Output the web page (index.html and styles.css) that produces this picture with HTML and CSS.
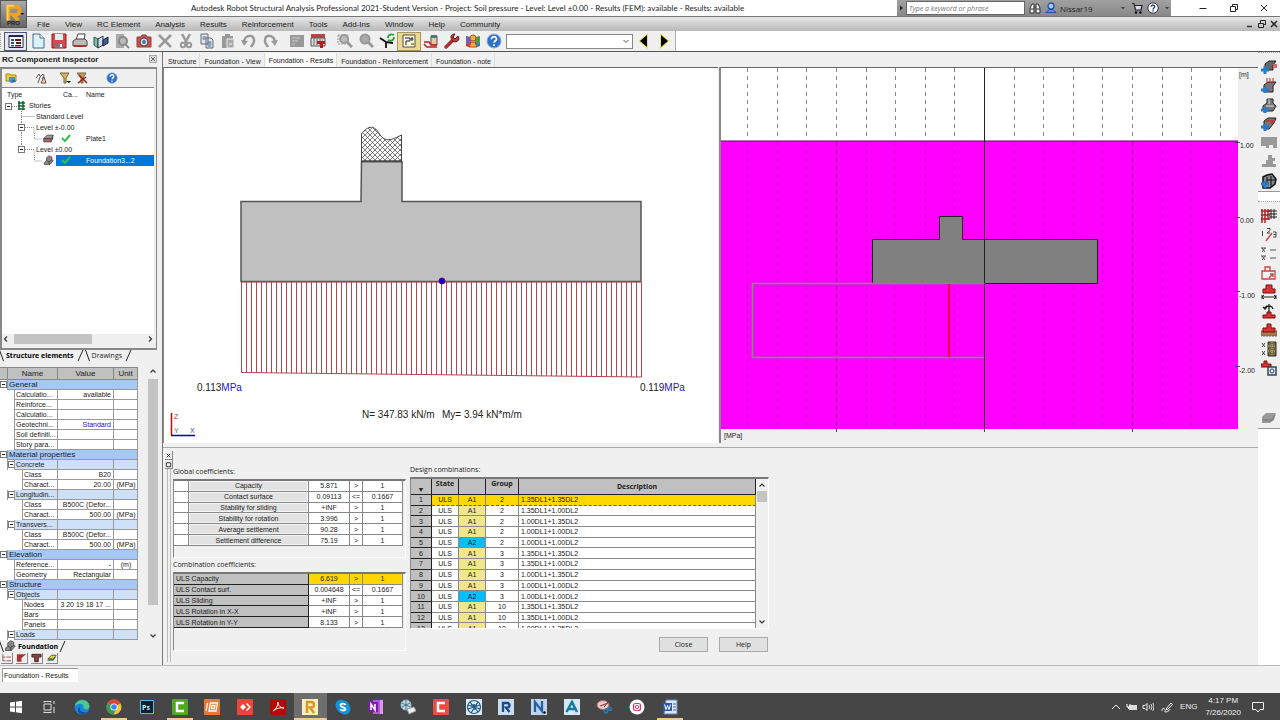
FILE: index.html
```html
<!DOCTYPE html>
<html lang="en">
<head>
  <meta charset="UTF-8" />
  <title>Autodesk Robot Structural Analysis Professional 2021</title>
  <link rel="stylesheet" href="styles.css">
</head>
<body>
  <!-- shared shapes -->
  <svg width="0" height="0" class="defs" aria-hidden="true">
    <symbol id="help" viewBox="0 0 16 16"><circle cx="8" cy="8" r="7" fill="#2f6fc4" stroke="#8fb4e6"/><path d="M5.5 6.2c0-3.4 5.2-3.2 5 0-.1 1.600-2.400 1.700-2.400 3.600M8 11.300v1.600" fill="none" stroke="#fff" stroke-width="1.800"/></symbol>
    <symbol id="slab" viewBox="0 0 16 16"><path d="M1 8l5-5h9l-3 5z" fill="#999" stroke="#444"/><path d="M1 8h11v5H1z" fill="#a66" stroke="#333"/><path d="M12 8l3-5v5l-3 5z" fill="#555"/></symbol>
    <symbol id="check" viewBox="0 0 10 10"><path d="M1 5l3 3 5-6" fill="none" stroke="#2fc050" stroke-width="2"/></symbol>
    <symbol id="minus" viewBox="0 0 7 7"><rect x=".5" y=".5" width="6" height="6" fill="#fff" stroke="#777"/><path d="M2 3.500h3" stroke="#222"/></symbol>
    <symbol id="found" viewBox="0 0 16 16"><path d="M2 11l3-3V4l4-3 4 2v4l2 1-5 6H2z" fill="#888" stroke="#444"/><path d="M5 8l4 2 4-3M9 10v4" fill="none" stroke="#333"/></symbol>
    <symbol id="up" viewBox="0 0 8 8"><path d="M1.500 5.500L4 3l2.500 2.500" fill="none" stroke="#333" stroke-width="1.200"/></symbol>
    <symbol id="down" viewBox="0 0 8 8"><path d="M1.500 2.500L4 5l2.500-2.500" fill="none" stroke="#333" stroke-width="1.200"/></symbol>
  </svg>

  <div class="app">
    <header class="titlebar">
      <button class="logo" aria-label="Application menu">
        <svg viewBox="0 0 27 27"><path d="M8 20V5h7q5 0 5 4.500T15 14h-2l6 6" fill="none" stroke="#f0a41c" stroke-width="4"/><path d="M6 3h8v2H8v15H6z" fill="#ffcf60"/><path d="M21 12h4l-2 2z" fill="#111"/></svg>
        <span>PRO</span>
      </button>
      <h1>Autodesk Robot Structural Analysis Professional 2021-Student Version - Project: Soil pressure - Level: Level ±0.00 - Results (FEM): available - Results: available</h1>
      <div class="infocenter">
        <svg class="s8" viewBox="0 0 8 8"><path d="M3 1.500v5L6 4z" fill="#222"/></svg>
        <input type="text" aria-label="Search" placeholder="Type a keyword or phrase">
        <button aria-label="Find"><svg class="s12" viewBox="0 0 12 12"><path d="M1 11V6l2-4h2v9zM7 11V2h2l2 4v5z" fill="#eee" stroke="#333"/><path d="M5 5h2M1 7h4M7 7h4" stroke="#333"/></svg></button>
        <button class="user"><svg class="s12" viewBox="0 0 12 12"><circle cx="6" cy="4" r="3" fill="#a9c8f5" stroke="#2450a8" stroke-width="1.300"/><path d="M1 10.500h10L8 7.500H4z" fill="#5d8ee0" stroke="#2450a8"/></svg>Nissar19</button>
        <svg class="s8" viewBox="0 0 8 8"><path d="M2 3h4L4 5.500z" fill="#444"/></svg>
        <button aria-label="Store"><svg class="s12" viewBox="0 0 12 12"><path d="M1 1.500h2L4.500 8h5.500l1-4.500H4" fill="#ddd" stroke="#223" stroke-width="1.200"/><circle cx="5" cy="10.500" r="1.200"/><circle cx="9.500" cy="10.500" r="1.200"/></svg></button>
        <button aria-label="Help"><svg class="s12" viewBox="0 0 12 12"><circle cx="6" cy="6" r="5.200" fill="#fff" stroke="#334"/><path d="M4.300 4.800c0-2.400 3.500-2.200 3.400 0C7.600 6 6 6 6 7.500M6 8.300v1.300" fill="none" stroke="#223a80" stroke-width="1.400"/></svg></button>
        <svg class="s8" viewBox="0 0 8 8"><path d="M2 3h4L4 5.500z" fill="#444"/></svg>
      </div>
      <div class="winbtns">
        <button aria-label="Minimize"><svg class="s8" viewBox="0 0 8 8"><path d="M.5 4.500h7" stroke="#222"/></svg></button>
        <button aria-label="Restore"><svg class="s8" viewBox="0 0 8 8"><path d="M.5 2.500h5v5h-5zM2.500 2V.5h5v5H6" fill="none" stroke="#222"/></svg></button>
        <button aria-label="Close"><svg class="s8" viewBox="0 0 8 8"><path d="M1 1l6 6M7 1L1 7" stroke="#222"/></svg></button>
      </div>
    </header>

    <nav class="menubar">
      <button>File</button><button>View</button><button>RC Element</button><button>Analysis</button><button>Results</button><button>Reinforcement</button><button>Tools</button><button>Add-Ins</button><button>Window</button><button>Help</button><button>Community</button>
      <div class="mdi">
        <button aria-label="Minimize view"><svg class="s8" viewBox="0 0 8 8"><path d="M1 6.500h5" stroke="#333" stroke-width="1.500"/></svg></button>
        <button aria-label="Restore view"><svg class="s8" viewBox="0 0 8 8"><path d="M.5 3.500h5v4h-5zM2.500 3V.5h5v4H6" fill="none" stroke="#222"/></svg></button>
        <button aria-label="Close view"><svg class="s8" viewBox="0 0 8 8"><path d="M1 1l6 6M7 1L1 7" stroke="#222" stroke-width="1.500"/></svg></button>
      </div>
    </nav>

    <div class="toolbar">
      <div class="tools">
        <div class="grip"></div>
        <div class="group g1">
          <button class="on" aria-label="Inspector"><svg viewBox="0 0 16 16"><path d="M1 2.500h14v12H1z" fill="#fff" stroke="#225"/><path d="M1 2h14v2H1z" fill="#225"/><path d="M3 6h3v2H3zM3 9h3v2H3zM3 12h3v1.500H3z" fill="#258"/><path d="M7 6h6v2H7zM8 9h5v2H8zM7 12h6v1.500H7z" fill="#522"/></svg></button>
          <button aria-label="New"><svg viewBox="0 0 16 16"><path d="M3 1h7l4 4v10H3z" fill="#d9f1fb" stroke="#4a6a85"/><path d="M10 1v4h4" fill="#fff" stroke="#4a6a85"/></svg></button>
          <button aria-label="Save"><svg viewBox="0 0 16 16"><path d="M1 1h14v14H1z" fill="#d9484c" stroke="#8c2024"/><path d="M4 1h8v6H4z" fill="#dff0f5"/><path d="M4 10h8v5H4z" fill="#777"/><path d="M9 11h2v3H9z" fill="#eee"/></svg></button>
          <button aria-label="Print"><svg viewBox="0 0 16 16"><path d="M4 7l2-6h7l-1 6z" fill="#fff" stroke="#444"/><path d="M1 8l3-2h9l2 2v5H1z" fill="#bbb" stroke="#444"/><path d="M2 12h12v2H2z" fill="#a33"/></svg></button>
          <button aria-label="Model"><svg viewBox="0 0 16 16"><path d="M1 4l4 2v9l-4-3z" fill="#79c29a" stroke="#256"/><path d="M5 6l5-3v9l-5 3z" fill="#c8e0f5" stroke="#333"/><path d="M10 7l5-3v6l-5 3z" fill="#3d5f96" stroke="#223"/></svg></button>
          <button aria-label="Preview"><svg viewBox="0 0 16 16"><path d="M2 1h8v14H2z" fill="#aaa"/><circle cx="9" cy="8" r="4" fill="#bbb" stroke="#888" stroke-width="2"/><path d="M11 11l4 4" stroke="#888" stroke-width="2"/></svg></button>
          <button aria-label="Capture"><svg viewBox="0 0 16 16"><path d="M1 4h4l1-2h4l1 2h4v10H1z" fill="#c9504e" stroke="#844"/><circle cx="8" cy="9" r="4" fill="#ddd" stroke="#544"/><circle cx="8" cy="9" r="2" fill="#47a"/></svg></button>
          <button aria-label="Delete"><svg viewBox="0 0 16 16"><path d="M2 2l12 12M14 2L2 14" stroke="#999" stroke-width="2.500"/></svg></button>
          <button aria-label="Cut"><svg viewBox="0 0 16 16"><path d="M4 1l5 9M12 1L7 10" stroke="#999" stroke-width="2.500"/><circle cx="5" cy="12" r="2.200" fill="none" stroke="#999" stroke-width="2"/><circle cx="11" cy="12" r="2.200" fill="none" stroke="#999" stroke-width="2"/></svg></button>
          <button aria-label="Copy"><svg viewBox="0 0 16 16"><path d="M2 1h7v10H2zM7 5h5l2 2v8H7z" fill="#dfe8f0" stroke="#667"/><path d="M3.500 4h4M3.500 6h3M8.500 9h4M8.500 11h4M8.500 13h4" stroke="#468"/></svg></button>
          <button aria-label="Paste"><svg viewBox="0 0 16 16"><path d="M2 3h3V1h5v2h3v12H2z" fill="#999"/><path d="M7 6h7v9H7z" fill="#aaa" stroke="#eee"/><path d="M9 11h3" stroke="#eee"/></svg></button>
          <button aria-label="Undo"><svg viewBox="0 0 16 16"><path d="M3 9C4 1 14 1 13 8c0 3-2 4-3 6" fill="none" stroke="#999" stroke-width="2.500"/><path d="M0 7l7 1-4 5z" fill="#999"/></svg></button>
          <button aria-label="Redo"><svg viewBox="0 0 16 16"><path d="M13 9C12 1 2 1 3 8c0 3 2 4 3 6" fill="none" stroke="#999" stroke-width="2.500"/><path d="M16 7l-7 1 4 5z" fill="#999"/></svg></button>
        </div>
        <div class="group g2">
          <button aria-label="Notes"><svg viewBox="0 0 16 16"><path d="M1 2h14v12H1z" fill="#999"/><path d="M3 5h8M3 8h6M3 11h3" stroke="#ccc"/></svg></button>
          <button aria-label="Calculate"><svg viewBox="0 0 16 16"><path d="M1 1h14v4H1z" fill="#b44"/><path d="M1 5h14v8H1z" fill="#ddd" stroke="#555"/><path d="M3 7h10M3 9h10M3 11h10" stroke="#666" stroke-dasharray="2 1"/><path d="M7 8h8v3h-2v4h-3v-4H7z" fill="#a22"/></svg></button>
        </div>
        <div class="group g3">
          <button aria-label="Zoom window"><svg viewBox="0 0 16 16"><path d="M1 2h10v9H1z" fill="none" stroke="#999" stroke-dasharray="2 1"/><circle cx="7" cy="6" r="4" fill="#bbb" stroke="#999" stroke-width="2"/><path d="M10 9l5 5" stroke="#999" stroke-width="3"/></svg></button>
          <button aria-label="Zoom all"><svg viewBox="0 0 16 16"><circle cx="7" cy="6" r="4.500" fill="#aaa" stroke="#999" stroke-width="2"/><path d="M10 9l5 5" stroke="#999" stroke-width="3"/></svg></button>
          <button aria-label="Rotate"><svg viewBox="0 0 16 16"><path d="M1 5l6 4v6M7 9l7 1" fill="none" stroke="#111" stroke-width="1.800"/><path d="M9 5c0-4 4-4 6-3M15 4c0 4-4 4-6 3" fill="none" stroke="#2a9a3a" stroke-width="1.800"/></svg></button>
          <button class="on sand" aria-label="Display"><svg viewBox="0 0 16 16"><path d="M2 2h12v12H2z" fill="#f8f4e0" stroke="#554"/><path d="M4 5h5v3H5v4M11 4v4M9.500 6h3" fill="none" stroke="#223"/><path d="M10 10h3v2h-3z" fill="#b59a3a"/></svg></button>
          <button aria-label="Notes on results"><svg viewBox="0 0 16 16"><path d="M8 3h6v9H8z" fill="#e6c9a0" stroke="#744"/><path d="M8 2h6v3H8z" fill="#2a8a78"/><path d="M1 9h5l2 3h6M1 11l3 3h10" fill="none" stroke="#b22" stroke-width="1.500"/></svg></button>
          <button aria-label="Preferences"><svg viewBox="0 0 16 16"><path d="M2 14l7-7" stroke="#a33" stroke-width="3.500" stroke-linecap="round"/><path d="M14 3l-3 3-2-2 2-3c-4 0-5 3-3 6s6 2 7-1z" fill="#b34242" stroke="#611"/></svg></button>
          <button aria-label="Community"><svg viewBox="0 0 16 16"><path d="M1 3l5 1v8l-5-2z" fill="#6c62c0"/><path d="M15 3l-5 1v8l5-2z" fill="#4a9a50"/><circle cx="8" cy="5" r="3" fill="#e9b23a" stroke="#a52"/><path d="M4 14l2-5h4l2 5z" fill="#e9b23a" stroke="#c33"/><path d="M1 10l4 1-1 3-3-1z" fill="#c33"/><path d="M15 10l-4 1 1 3 3-1z" fill="#37a"/></svg></button>
          <button aria-label="Help"><svg viewBox="0 0 16 16"><use href="#help"/></svg></button>
        </div>
        <select aria-label="Case"><option></option></select>
        <button class="step" aria-label="Previous"><svg viewBox="0 0 16 16"><path d="M11 2v12L4 8z" stroke="#e8e860" stroke-width="2" paint-order="stroke"/></svg></button>
        <button class="step" aria-label="Next"><svg viewBox="0 0 16 16"><path d="M5 2v12l7-6z" stroke="#e8e860" stroke-width="2" paint-order="stroke"/></svg></button>
      </div>
    </div>

    <div class="main">
      <aside class="inspector">
        <div class="panel-title"><h2>RC Component Inspector</h2><button aria-label="Close inspector"><svg class="s8" viewBox="0 0 8 8"><rect x=".5" y=".5" width="7" height="7" fill="#ddd" stroke="#aaa"/><path d="M2 2l4 4M6 2L2 6" stroke="#666"/></svg></button></div>
        <div class="tree-box">
          <div class="tree-tools">
            <button aria-label="Open"><svg class="s12" viewBox="0 0 12 12"><path d="M1 2h4l1 1h5v6H1z" fill="#f0c840" stroke="#a80"/><path d="M4 5h6v5H4z" fill="#4a90d0"/><path d="M5 11l4-4 2 3z" fill="#2a6ab0"/></svg></button>
            <button class="far" aria-label="Edit"><svg class="s12" viewBox="0 0 12 12"><path d="M1 6l3-4 1 2M3 11l2-6 3-3 1 2-2 3" fill="none" stroke="#555"/><path d="M6 11l3-6 2 6z" fill="#ddb" stroke="#844"/></svg></button>
            <button class="far2" aria-label="Filter"><svg class="s12" viewBox="0 0 12 12"><path d="M1 1h9L7 6v5H5V6z" fill="#d9b45a" stroke="#764"/><path d="M7 9h5l-2 2z"/></svg></button>
            <button aria-label="Clear filter"><svg class="s12" viewBox="0 0 12 12"><path d="M1 1h9L7 6v5H5V6z" fill="#c9a04a" stroke="#764"/><path d="M3 3l8 8M10 5l-8 6" stroke="#922" stroke-width="1.500"/></svg></button>
            <button class="far" aria-label="Help"><svg class="s12" viewBox="0 0 16 16"><use href="#help"/></svg></button>
          </div>
          <div class="tree-head"><span>Type</span><span>Ca...</span><span>Name</span></div>
          <ul class="tree">
            <li><svg width="25" height="11" viewBox="0 0 25 11"><use href="#minus" x="2" y="3" width="7" height="7"/><path d="M9 6.500h5" stroke="#888" stroke-dasharray="1 1"/><path d="M16 1v9M20 1v9M15 3h7M15 6h7M15 9h7" stroke="#163" stroke-width="1.500"/></svg>Stories</li>
            <li><svg width="32" height="11" viewBox="0 0 32 11"><path d="M18.500 0v11M18.500 5.500h13" stroke="#888" stroke-dasharray="1 1"/></svg>Standard Level</li>
            <li><svg width="32" height="11" viewBox="0 0 32 11"><path d="M18.500 0v11M22 5.500h9v6" fill="none" stroke="#888" stroke-dasharray="1 1"/><use href="#minus" x="15" y="2" width="7" height="7"/></svg>Level ±-0.00</li>
            <li><svg width="52" height="11" viewBox="0 0 52 11"><path d="M18.500 0v11M31.500 0v6h8" fill="none" stroke="#888" stroke-dasharray="1 1"/><use href="#slab" x="40" y="0" width="11" height="11"/></svg><span class="cells"><svg class="tick" viewBox="0 0 10 10"><use href="#check"/></svg>Plate1</span></li>
            <li><svg width="32" height="11" viewBox="0 0 32 11"><path d="M18.500 0v6M22 5.500h9v6" fill="none" stroke="#888" stroke-dasharray="1 1"/><use href="#minus" x="15" y="2" width="7" height="7"/></svg>Level ±0.00</li>
            <li><svg width="52" height="11" viewBox="0 0 52 11"><path d="M31.500 0v6h8" fill="none" stroke="#888" stroke-dasharray="1 1"/><use href="#found" x="40" y="0" width="11" height="11"/></svg><span class="cells selected"><svg class="tick" viewBox="0 0 10 10"><use href="#check"/></svg>Foundation3...2</span></li>
          </ul>
          <div class="hscroll"><svg class="s8" viewBox="0 0 8 8"><path d="M5 1.500L2.500 4 5 6.500" fill="none" stroke="#333" stroke-width="1.200"/></svg><div class="track"><div class="thumb"></div></div><svg class="s8" viewBox="0 0 8 8"><path d="M3 1.500L5.500 4 3 6.500" fill="none" stroke="#333" stroke-width="1.200"/></svg></div>
        </div>
        <div class="sheet-tabs roomy"><i class="back"></i><button class="active">Structure elements</button><i></i><i class="back"></i><button>Drawings</button><i></i></div>
        <div class="props">
          <table>
            <colgroup><col class="w8"><col class="w7"><col class="w8"><col><col class="w56"><col class="w24"></colgroup>
            <thead><tr><th></th><th colspan="3">Name</th><th>Value</th><th>Unit</th></tr></thead>
            <tbody>
              <tr class="cat"><td><svg><use href="#minus"/></svg></td><td colspan="5">General</td></tr>
              <tr><td></td><td></td><td colspan="2">Calculatio...</td><td>available</td><td></td></tr>
              <tr><td></td><td></td><td colspan="2">Reinforce...</td><td></td><td></td></tr>
              <tr><td></td><td></td><td colspan="2">Calculatio...</td><td></td><td></td></tr>
              <tr><td></td><td></td><td colspan="2">Geotechni...</td><td class="blue">Standard</td><td></td></tr>
              <tr><td></td><td></td><td colspan="2">Soil definiti...</td><td></td><td></td></tr>
              <tr><td></td><td></td><td colspan="2">Story para...</td><td></td><td></td></tr>
              <tr class="cat"><td><svg><use href="#minus"/></svg></td><td colspan="5">Material properties</td></tr>
              <tr class="sub"><td></td><td><svg><use href="#minus"/></svg></td><td colspan="2">Concrete</td><td></td><td></td></tr>
              <tr class="leaf"><td></td><td></td><td></td><td>Class</td><td>B20</td><td></td></tr>
              <tr class="leaf"><td></td><td></td><td></td><td>Charact...</td><td>20.00</td><td>(MPa)</td></tr>
              <tr class="sub"><td></td><td><svg><use href="#minus"/></svg></td><td colspan="2">Longitudin...</td><td></td><td></td></tr>
              <tr class="leaf"><td></td><td></td><td></td><td>Class</td><td>B500C (Defor...</td><td></td></tr>
              <tr class="leaf"><td></td><td></td><td></td><td>Charact...</td><td>500.00</td><td>(MPa)</td></tr>
              <tr class="sub"><td></td><td><svg><use href="#minus"/></svg></td><td colspan="2">Transvers...</td><td></td><td></td></tr>
              <tr class="leaf"><td></td><td></td><td></td><td>Class</td><td>B500C (Defor...</td><td></td></tr>
              <tr class="leaf"><td></td><td></td><td></td><td>Charact...</td><td>500.00</td><td>(MPa)</td></tr>
              <tr class="cat"><td><svg><use href="#minus"/></svg></td><td colspan="5">Elevation</td></tr>
              <tr><td></td><td></td><td colspan="2">Reference...</td><td>-</td><td>(m)</td></tr>
              <tr><td></td><td></td><td colspan="2">Geometry</td><td>Rectangular</td><td></td></tr>
              <tr class="cat"><td><svg><use href="#minus"/></svg></td><td colspan="5">Structure</td></tr>
              <tr class="sub"><td></td><td><svg><use href="#minus"/></svg></td><td colspan="2">Objects</td><td></td><td></td></tr>
              <tr class="leaf"><td></td><td></td><td></td><td>Nodes</td><td>3 20 19 18 17 ...</td><td></td></tr>
              <tr class="leaf"><td></td><td></td><td></td><td>Bars</td><td></td><td></td></tr>
              <tr class="leaf"><td></td><td></td><td></td><td>Panels</td><td></td><td></td></tr>
              <tr class="sub"><td></td><td><svg><use href="#minus"/></svg></td><td colspan="2">Loads</td><td></td><td></td></tr>
            </tbody>
          </table>
          <div class="vscroll"><svg class="s8"><use href="#up"/></svg><div class="thumb"></div><svg class="s8"><use href="#down"/></svg></div>
        </div>
        <div class="sheet-tabs"><i class="back"></i><svg class="s12"><use href="#found"/></svg><button class="active">Foundation</button><i></i></div>
        <div class="mini">
          <button aria-label="Tree"><svg viewBox="0 0 12 10"><path d="M2 1v7h3M2 4h3M6 4h5M6 8h5" fill="none" stroke="#855"/></svg></button>
          <button aria-label="Section"><svg viewBox="0 0 12 10"><path d="M1 1h10L6 5v4H1z" fill="#a33"/></svg></button>
          <button aria-label="Column"><svg viewBox="0 0 12 10"><path d="M1 1h10v3H8v5H4V4H1z" fill="#844" stroke="#422"/></svg></button>
          <button aria-label="Layers"><svg viewBox="0 0 12 10"><path d="M1 8l4-4h6L8 8z" fill="#386"/><path d="M2 6l4-4h5L8 6z" fill="#ec5" stroke="#552"/></svg></button>
        </div>
      </aside>

      <section class="workspace">
        <div class="tabs">
          <button>Structure</button><button>Foundation - View</button><button class="active">Foundation - Results</button><button>Foundation - Reinforcement</button><button>Foundation - note</button>
        </div>
        <div class="views">
          <div class="view view-left">
            <svg viewBox="164 68 550 375" preserveAspectRatio="xMinYMin meet">
              <defs>
                <pattern id="hatch" width="5" height="5" patternUnits="userSpaceOnUse"><path d="M0 0l5 5M5 0L0 5" stroke="#444" stroke-width=".7"/></pattern>
                <pattern id="bars" x="241" y="0" width="5" height="400" patternUnits="userSpaceOnUse"><path d="M.5 0v400" stroke="#b4454f"/></pattern>
              </defs>
              <path d="M361.500 161V134c7-9 13-9 18 0 6 9 12 6 22 1v26z" fill="url(#hatch)" stroke="#444"/>
              <path d="M361.500 161.500h40.500v40h239v80h-400v-80h120z" fill="#c0c0c0" stroke="#555" stroke-width="1.500"/>
              <path d="M361 161.500h41" stroke="#444" stroke-width="1.500"/>
              <path d="M241.500 282h400v95l-400-4.500z" fill="url(#bars)" stroke="#b4454f"/>
              <circle cx="442" cy="281" r="3" fill="#1000c8" stroke="#600080"/>
              <text x="197" y="391">0.113<tspan class="unit">MPa</tspan></text>
              <text x="640" y="391">0.119<tspan class="unit">MPa</tspan></text>
              <text x="362" y="418">N= 347.83 kN/m</text>
              <text x="442" y="418">My= 3.94 kN*m/m</text>
              <path d="M171.500 413v22" stroke="#d00" stroke-width="1.500"/><path d="M171 435.500h24" stroke="#00a" stroke-width="1.500"/>
              <g class="axis"><text class="z" x="174" y="419">Z</text><text class="y" x="174" y="433">Y</text><text class="x" x="190" y="433">X</text></g>
            </svg>
          </div>
          <div class="view view-right">
            <svg viewBox="722 68 535 375" preserveAspectRatio="xMinYMin meet">
              <path d="M722 68h517v361H722z" fill="#fff"/>
              <path d="M722 141h517v288H722z" fill="#f0f"/>
              <path d="M722 141h517" stroke="#606"/>
              <g stroke="#888" stroke-dasharray="4 4">
                <path d="M748.500 68v72M778.500 68v72M807.500 68v72M837.500 68v72M867.500 68v72M896.500 68v72M926.500 68v72M955.500 68v72M1015.500 68v72M1044.500 68v72M1074.500 68v72M1103.500 68v72M1133.500 68v72M1163.500 68v72M1192.500 68v72M1221.500 68v72"/>
              </g>
              <g stroke="#d010d0" stroke-dasharray="4 4">
                <path d="M748.500 142v287M778.500 142v287M807.500 142v287M867.500 142v287M896.500 142v287M926.500 142v287M955.500 142v287M1015.500 142v287M1044.500 142v287M1074.500 142v287M1103.500 142v287M1163.500 142v287M1192.500 142v287M1221.500 142v287"/>
                <path d="M837.500 142v287M1133.500 142v287" stroke="#707"/>
              </g>
              <path d="M873.500 239.500h67v-23h23v23h135v44h-225z" fill="#808080" stroke="#222"/>
              <path d="M985.500 68v361" stroke="#222"/>
              <path d="M985.500 283.500h-232v74h232" fill="none" stroke="#6a9a6a" stroke-width="1.500"/>
              <path d="M950 284v73" stroke="#f00030" stroke-width="2"/>
              <path d="M1236 142.500h5M1236 217.500h5M1236 291.500h5M1236 366.500h5M985.500 428v4M837.500 428v4M1133.500 428v4" stroke="#444"/>
              <g class="scale"><text x="1240" y="77">[m]</text><text x="1241" y="148">1.00</text><text x="1241" y="223">0.00</text><text x="1240" y="298">-1.00</text><text x="1240" y="373">-2.00</text><text x="725" y="438">[MPa]</text></g>
            </svg>
          </div>
        </div>

        <div class="results">
          <div class="dock">
            <button aria-label="Close panel"><svg viewBox="0 0 8 8"><path d="M2 2l4 4M6 2L2 6" stroke="#222"/></svg></button>
            <button aria-label="Maximize panel"><svg viewBox="0 0 8 8"><path d="M1.500 2h5v4.500h-5z" fill="none" stroke="#222"/></svg></button>
            <div class="rail"></div>
          </div>
          <div class="coefs">
            <h3>Global coefficients:</h3>
            <div class="sunken">
              <table class="coef global">
                <colgroup><col class="w15"><col><col class="w41"><col class="w13"><col class="w40"></colgroup>
                <tr><td></td><th>Capacity</th><td>5.871</td><td>&gt;</td><td>1</td></tr>
                <tr><td></td><th>Contact surface</th><td>0.09113</td><td>&lt;=</td><td>0.1667</td></tr>
                <tr><td></td><th>Stability for sliding</th><td>+INF</td><td>&gt;</td><td>1</td></tr>
                <tr><td></td><th>Stability for rotation</th><td>3.996</td><td>&gt;</td><td>1</td></tr>
                <tr><td></td><th>Average settlement</th><td>90.28</td><td>&gt;</td><td>1</td></tr>
                <tr><td></td><th>Settlement difference</th><td>75.19</td><td>&gt;</td><td>1</td></tr>
              </table>
            </div>
            <h3>Combination coefficients:</h3>
            <div class="sunken">
              <table class="coef combo">
                <colgroup><col><col class="w41"><col class="w13"><col class="w40"></colgroup>
                <tr class="hot"><th>ULS Capacity</th><td>6.619</td><td>&gt;</td><td>1</td></tr>
                <tr><th>ULS Contact surf.</th><td>0.004648</td><td>&lt;=</td><td>0.1667</td></tr>
                <tr><th>ULS Sliding</th><td>+INF</td><td>&gt;</td><td>1</td></tr>
                <tr><th>ULS Rotation in X-X</th><td>+INF</td><td>&gt;</td><td>1</td></tr>
                <tr><th>ULS Rotation in Y-Y</th><td>8.133</td><td>&gt;</td><td>1</td></tr>
              </table>
            </div>
          </div>
          <div class="combos">
            <h3>Design combinations:</h3>
            <div class="sunken combo-list">
              <table>
                <colgroup><col class="w21"><col class="w27"><col class="w27"><col class="w33"><col></colgroup>
                <thead><tr><th class="sort">▼</th><th>State</th><th></th><th>Group</th><th class="mid">Description</th></tr></thead>
                <tbody>
                  <tr class="hot"><th>1</th><td>ULS</td><td>A1</td><td>2</td><td>1.35DL1+1.35DL2</td></tr>
                  <tr><th>2</th><td>ULS</td><td>A1</td><td>2</td><td>1.35DL1+1.00DL2</td></tr>
                  <tr><th>3</th><td>ULS</td><td>A1</td><td>2</td><td>1.00DL1+1.35DL2</td></tr>
                  <tr><th>4</th><td>ULS</td><td>A1</td><td>2</td><td>1.00DL1+1.00DL2</td></tr>
                  <tr><th>5</th><td>ULS</td><td class="a2">A2</td><td>2</td><td>1.00DL1+1.00DL2</td></tr>
                  <tr><th>6</th><td>ULS</td><td>A1</td><td>3</td><td>1.35DL1+1.35DL2</td></tr>
                  <tr><th>7</th><td>ULS</td><td>A1</td><td>3</td><td>1.35DL1+1.00DL2</td></tr>
                  <tr><th>8</th><td>ULS</td><td>A1</td><td>3</td><td>1.00DL1+1.35DL2</td></tr>
                  <tr><th>9</th><td>ULS</td><td>A1</td><td>3</td><td>1.00DL1+1.00DL2</td></tr>
                  <tr><th>10</th><td>ULS</td><td class="a2">A2</td><td>3</td><td>1.00DL1+1.00DL2</td></tr>
                  <tr><th>11</th><td>ULS</td><td>A1</td><td>10</td><td>1.35DL1+1.35DL2</td></tr>
                  <tr><th>12</th><td>ULS</td><td>A1</td><td>10</td><td>1.35DL1+1.00DL2</td></tr>
                  <tr><th>13</th><td>ULS</td><td>A1</td><td>10</td><td>1.00DL1+1.35DL2</td></tr>
                </tbody>
              </table>
              <div class="vscroll"><svg class="s8"><use href="#up"/></svg><div class="thumb"></div><svg class="s8"><use href="#down"/></svg></div>
            </div>
            <div class="actions"><button>Close</button><button>Help</button></div>
          </div>
        </div>
      </section>

      <aside class="sidetools">
        <div class="strip">
          <button aria-label="Loads"><svg viewBox="0 0 16 16"><path d="M4 5l4-3h7l-3 4v5H4z" fill="#666" stroke="#222"/><path d="M0 11h8M4 7v8" stroke="#2a7ac8" stroke-width="3"/><path d="M12 5h4v4h-4z" fill="#d66"/></svg></button>
          <button aria-label="Add column"><svg viewBox="0 0 16 16"><path d="M3 7l4-3h8l-3 4v6H3z" fill="#777" stroke="#222"/><path d="M6 0v5M9 0v5M12 0v5" stroke="#c22"/><path d="M0 12h8M4 9v6" stroke="#2a7ac8" stroke-width="3"/></svg></button>
          <button aria-label="Add footing"><svg viewBox="0 0 16 16"><path d="M2 9l4-3V2h6v4l3 3-3 5H2z" fill="#777" stroke="#222"/><path d="M5 9h8M8 2v5" stroke="#ddd"/><path d="M0 13h8M4 10v6" stroke="#2a7ac8" stroke-width="3"/></svg></button>
          <button aria-label="Add beam"><svg viewBox="0 0 16 16"><path d="M3 5l4-3h8l-2 5-5 6H3z" fill="#777" stroke="#222"/><path d="M5 5h9M10 8l4-4" stroke="#c33" stroke-width="1.500"/><path d="M0 11h8M4 8v7" stroke="#2a7ac8" stroke-width="3"/></svg></button>
          <button aria-label="Wall"><svg viewBox="0 0 16 16"><path d="M0 2h16v11h-4v-3H8v3H5v-2H0z" fill="#999"/></svg></button>
          <button aria-label="Stairs"><svg viewBox="0 0 16 16"><path d="M7 1h4v3h3v3h-2v3h3v3H1v-3h4V6h2z" fill="#999"/></svg></button>
          <button aria-label="Tank"><svg viewBox="0 0 16 16"><path d="M2 4l4-2 5-1 4 5-1 5-5 4H2z" fill="#888" stroke="#111" stroke-width="1.500"/><path d="M6 4v6M6 7h9M10 3v10" stroke="#111"/><path d="M0 11h8M4 8v7" stroke="#2a7ac8" stroke-width="3"/></svg></button>
        </div>
        <div class="strip second">
          <button aria-label="Grid"><svg viewBox="0 0 16 16"><path d="M1 1v14M4 1v14M7 1v11M0 3h9M0 7h9M0 11h9" stroke="#a22" stroke-width="1.500"/><path d="M8 3h8M8 6h8M8 9h8M10 1v10M13 1v10" stroke="#222"/></svg></button>
          <button aria-label="Numbers"><svg viewBox="0 0 16 16"><path d="M1.500 4v5M6 1.500h3v2L6 6h3M12 5h3v5h-3M12.500 7.500H15" fill="none" stroke="#444"/><path d="M5 14l6-8" stroke="#d44" stroke-width="1.500"/></svg></button>
          <button aria-label="List"><svg viewBox="0 0 16 16"><path d="M1 2l3 4M4 2L1 6M1 10l3 4M4 10l-3 4M0 2h5M0 10h5M9 4h6M9 12h6" stroke="#555"/></svg></button>
          <button aria-label="Dimensions"><svg viewBox="0 0 16 16"><path d="M1 6h13v8H1zM4 6V2h5v4M9 9h3v3M12 9l-4 4" fill="none" stroke="#c44" stroke-width="1.300"/></svg></button>
          <button aria-label="Footing width"><svg viewBox="0 0 16 16"><path d="M5 1h6v4h3v4H2V5h3z" fill="#d33" stroke="#711"/><path d="M1 13h14M1 11v4M15 11v4M3 11l-2 2 2 2M13 11l2 2-2 2" fill="none" stroke="#222"/></svg></button>
          <button aria-label="Forces"><svg viewBox="0 0 16 16"><path d="M6 9h4v3h4v3H2v-3h4z" fill="#d33" stroke="#711"/><path d="M8 9V1M4 6c0-4 7-4 8 0M2 4l2 2 2-2" fill="none" stroke="#222" stroke-width="1.300"/></svg></button>
          <button aria-label="Soil"><svg viewBox="0 0 16 16"><path d="M0 9h16v5H0z" fill="#a87850" stroke="#654" stroke-dasharray="2 1"/><path d="M6 2h4v4h4v4H2V6h4z" fill="#d33" stroke="#711"/></svg></button>
          <button aria-label="Soil layers"><svg viewBox="0 0 16 16"><path d="M1 2l3 4M4 2L1 6M1 10l3 4M4 10l-3 4" stroke="#444"/><path d="M7 1h8v14H7z" fill="#776b3a" stroke="#332"/><path d="M7 5h8M7 10h8M11 1v14" stroke="#bba" stroke-dasharray="1 1"/></svg></button>
          <button aria-label="Settings"><svg viewBox="0 0 16 16"><path d="M3 1h3v3h4v3H0V4h3z" fill="#d33" stroke="#711"/><path d="M7 7h8v8H7z" fill="#dde8f4" stroke="#345" stroke-width="1.500"/><circle cx="11" cy="11" r="2" fill="none" stroke="#345"/></svg></button>
          <button class="last" aria-label="Export"><svg viewBox="0 0 16 16"><path d="M1 7l4-4h10l-2 7-4 3H1z" fill="#999"/><path d="M2 10h9l3-5" fill="none" stroke="#777"/></svg></button>
        </div>
      </aside>
    </div>

    <footer class="status"><span>Foundation - Results</span></footer>

    <div class="taskbar">
      <div class="apps">
        <button aria-label="Start"><svg viewBox="0 0 16 16"><path d="M2 3.500l5-.7v4.700H2zM8 2.700l6-.9v5.700H8zM2 8.500h5v4.700l-5-.7zM8 8.500h6v5.700l-6-.9z" fill="#fff"/></svg></button>
        <button aria-label="Task view"><svg viewBox="0 0 16 16"><path d="M3 5h7v6H3zM3 3.500V2M10 3.500V2M3 12.500V14M10 12.500V14M3 2.500h7M3 13.500h7M13 2v3M13 8v6" fill="none" stroke="#ddd"/></svg></button>
        <button aria-label="Edge"><svg viewBox="0 0 16 16"><circle cx="8" cy="8" r="7.500" fill="#1a86d8"/><path d="M1 7C2 0 14-1 15.500 7c0 4-5 4-6 2 1-4-4-6-8.500-2z" fill="#4dcb8c"/><path d="M6 8c-1 4 3 6 7 5-3 4-9 2-9-2 0-2 1-3 2-3z" fill="#0d4fa0"/></svg></button>
        <button class="open" aria-label="Chrome"><svg viewBox="0 0 16 16"><circle cx="8" cy="8" r="7.500" fill="#f2c52c"/><path d="M8 8L1.500 4.300A7.500 7.500 0 0114.500 4.300z" fill="#dc4437"/><path d="M8 8L1.500 4.300A7.500 7.500 0 007.500 15.500l3-6z" fill="#2da04f"/><circle cx="8" cy="8" r="3.600" fill="#fff"/><circle cx="8" cy="8" r="2.800" fill="#4285f4"/></svg></button>
        <button aria-label="Photoshop"><svg viewBox="0 0 16 16"><path d="M1.500 1.500h13v13h-13z" fill="#07202e" stroke="#4ac0e8"/><text x="3" y="11" fill="#cdeefc">Ps</text></svg></button>
        <button class="open" aria-label="Camtasia"><svg viewBox="0 0 16 16"><rect width="16" height="16" rx="1" fill="#4fa81e"/><path d="M12 4H5v8h7" fill="none" stroke="#fff" stroke-width="2.500"/></svg></button>
        <button aria-label="IDM"><svg viewBox="0 0 16 16"><rect width="16" height="16" rx="1" fill="#e67a34"/><path d="M3.500 4L2 12M6.500 4h7L12 12H5zM8 6.500h3L10.300 9.500H7.500z" fill="none" stroke="#fff" stroke-width="1.300"/></svg></button>
        <button aria-label="AnyDesk"><svg viewBox="0 0 16 16"><rect width="16" height="16" rx="1" fill="#ee4438"/><path d="M3 8l3-3 3 3-3 3zM9 5l1-1 4 4-4 4-1-1 3-3z" fill="#fff"/></svg></button>
        <button aria-label="Acrobat"><svg viewBox="0 0 16 16"><rect width="16" height="16" rx="2" fill="#b30b00"/><path d="M3 12c3-2 5-5 5-9 0 4 3 6 6 6-4-.5-7 0-11 3z" fill="none" stroke="#fff"/></svg></button>
        <button class="open current" aria-label="Robot"><svg viewBox="0 0 16 16"><path d="M0 0h16v16H0z" fill="#f9ecc8"/><path d="M5 14V3h4q3 0 3 2.800T9 8.600H8l4 5.400" fill="none" stroke="#dc981c" stroke-width="2.500"/></svg></button>
        <button aria-label="Skype"><svg viewBox="0 0 16 16"><circle cx="6" cy="6" r="5.500" fill="#1493dc"/><circle cx="10" cy="10" r="5.500" fill="#1493dc"/><circle cx="8" cy="8" r="6.500" fill="#1493dc"/><path d="M10.500 6C10 4 5.500 4 5.500 6.300S10.500 8 10.500 10 6 12 5.300 10" fill="none" stroke="#fff" stroke-width="1.800"/></svg></button>
        <button aria-label="OneNote"><svg viewBox="0 0 16 16"><path d="M5 1h10v14H5z" fill="#b45ad0"/><path d="M12 1h3v14h-3z" fill="#d89ae8"/><path d="M0 3h10v10H0z" fill="#7a1fa0"/><path d="M3 11V5l4 6V5" fill="none" stroke="#fff" stroke-width="1.500"/></svg></button>
        <button aria-label="Network"><svg viewBox="0 0 16 16"><circle cx="6" cy="6" r="5" fill="#b9dbe9" stroke="#9bc"/><path d="M2 4c3 2 5 2 8 0M2 8c3-2 5-2 8 0M6 1v10" fill="none" stroke="#578"/><path d="M7 10l7-2 2 4-7 3z" fill="#eee" stroke="#999"/></svg></button>
        <button aria-label="Recorder"><svg viewBox="0 0 16 16"><rect width="16" height="16" rx="1" fill="#ea4d3d"/><path d="M12 4H5v8h7" fill="none" stroke="#fff" stroke-width="2.500"/></svg></button>
        <button aria-label="Sphere"><svg viewBox="0 0 16 16"><path d="M0 0h16v16H0z" fill="#dcebf5"/><path d="M8 1.500A6.500 6.500 0 118 14.500 6.500 6.500 0 018 1.500M2 6l12 4M4 3l8 10M12 3L5 14M2 10l12-4M8 5v6M5 6h6" fill="none" stroke="#1d5a84" stroke-width="1.200"/></svg></button>
        <button aria-label="Revit"><svg viewBox="0 0 16 16"><path d="M0 0h16v16H0z" fill="#c9dcf0"/><path d="M5 13V4h4q2.500 0 2.500 2.300T9 8.600H8l3.500 4.400" fill="none" stroke="#1c4a8c" stroke-width="2.300"/></svg></button>
        <button aria-label="Navisworks"><svg viewBox="0 0 16 16"><path d="M0 0h16v16H0z" fill="#bcd4ee"/><path d="M4 13V3l7 9V2" fill="none" stroke="#2660a0" stroke-width="2.300"/><circle cx="13.500" cy="13.500" r="1.200"/></svg></button>
        <button aria-label="AutoCAD"><svg viewBox="0 0 16 16"><path d="M0 0h16v16H0z" fill="#d3e7f4"/><path d="M2.500 13L8 3l5 10M5 10h6" fill="none" stroke="#167aa0" stroke-width="2.500"/></svg></button>
        <button aria-label="Snipping tool"><svg viewBox="0 0 16 16"><ellipse cx="7" cy="6" rx="6" ry="4.500" fill="#e9c8c8" stroke="#a66"/><path d="M4 7l8-3M8 8l5-6" stroke="#833"/><circle cx="10" cy="12" r="1.800" fill="none" stroke="#2a7ab8" stroke-width="1.500"/><circle cx="14" cy="10" r="1.500" fill="none" stroke="#2a7ab8" stroke-width="1.500"/></svg></button>
        <button aria-label="Instagram"><svg viewBox="0 0 16 16"><circle cx="8" cy="8" r="7.500" fill="#fff"/><rect x="4.500" y="4.500" width="7" height="7" rx="2" fill="none" stroke="#d3366a" stroke-width="1.200"/><circle cx="8" cy="8" r="1.700" fill="none" stroke="#d3366a"/></svg></button>
        <button class="open" aria-label="Word"><svg viewBox="0 0 16 16"><path d="M4 1h11v14H2z" fill="#dce6f5" stroke="#6a86b8"/><path d="M1 4h9v8H1z" fill="#2c5aa8"/><path d="M2.500 5.500l1.500 5 1.500-4 1.500 4 1.500-5" fill="none" stroke="#fff"/><path d="M11 5h3M11 8h3M11 11h3" stroke="#36a"/></svg></button>
      </div>
      <div class="tray">
        <svg class="s12" viewBox="0 0 12 12"><path d="M2 8l4-4 4 4" fill="none" stroke="#eee"/></svg>
        <svg class="s12" viewBox="0 0 12 12"><path d="M3 4h8v5H3z" fill="#ddd"/><path d="M1 3v3h3V3M2.500 6v2" fill="none" stroke="#fff"/></svg>
        <svg class="s12" viewBox="0 0 12 12"><path d="M1 4.500h2l2-2v7l-2-2H1z" fill="none" stroke="#eee"/><path d="M7 4q1.500 2 0 4M9 3q2 3 0 6M11 2q2 4 0 8" fill="none" stroke="#ddd"/></svg>
        <svg class="s12 pen" viewBox="0 0 12 12"><path d="M5 8l5-6 1.500 1.500L6 9zM1 10c0-5 4-2 3 0s4 1 5-2" fill="none" stroke="#eee"/></svg>
        <span>ENG</span>
        <div class="clock"><span>4:17 PM</span><span>7/26/2020</span></div>
        <svg class="s12" viewBox="0 0 12 12"><path d="M.5 1.500h11v7H8L6 11 4 8.500H.5z" fill="none" stroke="#eee"/></svg>
      </div>
    </div>
  </div>
</body>
</html>
```
FILE: styles.css
```css
* {
  box-sizing: border-box;
}
body {
  margin: 0;
  font-family: "Liberation Sans", Arial, sans-serif;
  font-size: 7px;
  line-height: 9px;
  color: #222;
  background: #f0f0f0;
}
h1, h2, h3, ul {
  margin: 0;
  padding: 0;
  font-size: inherit;
  font-weight: normal;
}
svg {
  display: block;
  flex: none;
}
button {
  font: inherit;
  color: inherit;
  background: none;
  border: 0;
  padding: 0;
  display: flex;
  align-items: center;
  justify-content: center;
  white-space: nowrap;
}
table {
  border-collapse: separate;
  border-spacing: 0;
  table-layout: fixed;
}
td, th {
  padding: 0;
  font-weight: normal;
  white-space: nowrap;
  overflow: hidden;
}
.defs { position: absolute; }
.s8 { width: 8px; height: 8px; }
.s12 { width: 12px; height: 12px; }
.w7 { width: 7px; }
.w8 { width: 8px; }
.w13 { width: 13px; }
.w15 { width: 15px; }
.w21 { width: 21px; }
.w24 { width: 24px; }
.w27 { width: 27px; }
.w33 { width: 33px; }
.w40 { width: 40px; }
.w41 { width: 41px; }
.w56 { width: 56px; }

.app {
  height: 100vh;
  display: flex;
  flex-direction: column;
}

/* title bar */
.titlebar {
  position: relative;
  flex: none;
  display: flex;
  align-items: center;
  height: 17px;
  background: #fff;
  border-bottom: 1px solid #777;
}
.logo {
  position: absolute;
  left: 0;
  top: 0;
  width: 27px;
  height: 28px;
  background: linear-gradient(#aaa, #666);
  border: 1px solid #555;
}
.logo svg {
  width: 25px;
  height: 25px;
}
.logo span {
  position: absolute;
  bottom: 0;
  left: 6px;
  font-size: 6px;
  line-height: 7px;
  font-weight: bold;
  color: #222;
}
.titlebar h1 {
  flex: 1;
  padding-left: 191px;
  font: 8px/16px Lato, sans-serif;
  white-space: nowrap;
}
.infocenter {
  display: flex;
  align-items: center;
  height: 16px;
  width: 274px;
  gap: 4px;
  background: linear-gradient(#a0a0a0, #888);
  font-family: "Open Sans", sans-serif;
}
.infocenter input {
  width: 119px;
  height: 14px;
  margin-left: -3px;
  padding: 0 2px;
  border: 1px solid #666;
  background: #fff;
  font: italic 7px "Open Sans", sans-serif;
}
.infocenter .user {
  gap: 3px;
  font-size: 8px;
  margin-right: auto;
}
.winbtns {
  display: flex;
  justify-content: space-between;
  width: 109px;
  padding: 0 12px 0 28px;
}

/* menu */
.menubar {
  flex: none;
  display: flex;
  align-items: center;
  gap: 15px;
  height: 14px;
  padding-left: 37px;
  background: linear-gradient(#e6e6e6, #b8b8b8);
  font-size: 8px;
}
.mdi {
  display: flex;
  gap: 4px;
  margin-left: auto;
  padding-right: 2px;
}

/* toolbar */
.toolbar {
  flex: none;
  height: 21px;
  background: #fff;
  border-bottom: 1px solid #555;
}
.tools {
  display: inline-flex;
  align-items: center;
  height: 20px;
  background: #f0f0f0;
  border-right: 1px solid #aaa;
  padding-right: 1px;
}
.grip {
  width: 4px;
  height: 16px;
  border-left: 1px dotted #aaa;
}
.group {
  display: flex;
}
.group button {
  flex: 1;
  height: 19px;
}
.group svg, .step svg {
  width: 16px;
  height: 16px;
}
.group svg { max-width: 16px; }
.g1 { width: 277px; margin-right: 5px; }
.g2 { width: 43px; margin-right: 5px; }
.g3 { width: 171px; }
.group .on {
  border: 1px solid #557;
  background: #e4e8f0;
}
.group .on.sand {
  background: #e8d890;
  border-color: #aa9860;
}
.toolbar select {
  appearance: none;
  width: 127px;
  height: 15px;
  margin: 0 1px;
  border: 1px solid #888;
  background: #fff url("data:image/svg+xml,%3Csvg xmlns='http://www.w3.org/2000/svg' width='8' height='8'%3E%3Cpath d='M1.500 3L4 5.500 6.500 3' fill='none' stroke='%23555'/%3E%3C/svg%3E") right 2px center no-repeat;
}
.step {
  width: 20px;
}

/* main area */
.main {
  flex: 1;
  min-height: 0;
  display: flex;
}
.inspector {
  width: 162px;
  flex: none;
  display: flex;
  flex-direction: column;
  padding-right: 4px;
}
.panel-title {
  display: flex;
  justify-content: space-between;
  align-items: center;
  height: 15px;
  padding: 0 1px 0 2px;
  font-size: 8px;
}
.panel-title h2 {
  font-weight: bold;
}
.tree-box {
  flex: 1 1 284px;
  display: flex;
  flex-direction: column;
  margin-right: 1px;
  padding: 1px 2px 3px 0;
  border: 1px solid #888;
  border-width: 2px 1px 2px 2px;
}
.tree-tools {
  display: flex;
  height: 17px;
  padding-left: 3px;
  gap: 5px;
}
.tree-tools .far { margin-left: 13px; }
.tree-tools .far2 { margin-left: 7px; }
.tree-head {
  display: grid;
  grid-template-columns: 56px 23px 1fr;
  height: 13px;
  padding: 2px 0 0 5px;
  background: #fff;
  border-top: 1px solid #888;
}
.tree {
  flex: 1;
  list-style: none;
  background: #fff;
}
.tree li {
  display: flex;
  height: 11px;
  line-height: 11px;
  padding-left: 1px;
  white-space: nowrap;
}
.tree li > svg { margin-right: 1px; }
.cells {
  flex: 1;
  display: flex;
  align-items: center;
  gap: 15px;
  padding-left: 5px;
}
.cells.selected {
  background: #0078d7;
  color: #fff;
}
.tick {
  width: 10px;
  height: 10px;
}
.hscroll {
  display: flex;
  align-items: center;
  height: 11px;
}
.hscroll .track {
  flex: 1;
  padding: 0 4px;
}
.hscroll .thumb {
  width: 61%;
  height: 10px;
  background: #c4c4c4;
}
.sheet-tabs {
  flex: none;
  display: flex;
  align-items: center;
  height: 12px;
  padding-left: 1px;
  gap: 2px;
  font-family: "Open Sans", sans-serif;
}
.sheet-tabs.roomy { gap: 4px; }
.sheet-tabs i {
  width: 1px;
  height: 11px;
  margin: 0 2px;
  background: #222;
  transform: skewX(-24deg);
}
.sheet-tabs i.back { transform: skewX(20deg); margin: 0; }
.sheet-tabs .active { font-weight: bold; color: #000; }

.props {
  flex: 1 1 274px;
  min-height: 0;
  display: flex;
  justify-content: space-between;
  align-items: stretch;
  overflow: hidden;
  margin-top: 5px;
}
.props table {
  width: 138px;
  height: 273px;
  flex: none;
  background: #fff;
}
.props th {
  height: 13px;
  background: #c0c0c0;
  border: 1px solid #888;
  border-width: 1px 1px 1px 0;
  font-size: 8px;
}
.props td {
  height: 10px;
  border-right: 1px solid #999;
  border-bottom: 1px solid #999;
  padding-left: 1px;
}
.props td:empty, .props td:has(svg) { padding: 0; }
.props td:first-child, .props tr:not(.cat) td:nth-child(2), .props .leaf td:nth-child(3) {
  border-bottom: 0;
}
.props tr:not(.cat):not(.sub) td:first-child, .props .leaf td:nth-child(2) { border-right-color: transparent; }
.props td:nth-last-child(2) { text-align: right; padding-right: 2px; }
.props td:last-child { text-align: center; }
.props td svg { width: 7px; height: 7px; }
.props .cat td:last-child {
  background: #a6c8f5;
  font-size: 8px;
  text-align: left;
  color: #123;
}
.props .cat td:first-child { padding: 0; text-align: left; }
.props .sub td:nth-child(n+3) { background: #cde0f7; }
.props .blue { color: #22a; }
.vscroll {
  width: 11px;
  display: flex;
  flex-direction: column;
  align-items: center;
  background: #f0f0f0;
}
.vscroll .thumb {
  width: 10px;
  background: #c4c4c4;
}
.props .thumb { height: 226px; margin: 4px 0 auto; }
.mini {
  flex: none;
  display: flex;
  gap: 3px;
  height: 13px;
  padding: 1px;
}
.mini button {
  width: 12px;
  border: 1px solid #888;
  border-width: 0 1px 1px 0;
}
.mini svg { width: 11px; height: 10px; }

/* workspace */
.workspace {
  flex: 1;
  min-width: 0;
  display: flex;
  flex-direction: column;
  border-left: 1px solid #777;
}
.tabs {
  display: flex;
  flex: none;
  height: 15px;
  padding: 1px 0 0 1px;
}
.tabs button {
  padding: 2px 3px 0 4px;
  border-right: 1px solid #ddd;
}
.tabs .active {
  background: #fafafa;
  padding-top: 0;
}
.views {
  flex: 1;
  min-height: 0;
  display: flex;
  gap: 1px;
  padding-bottom: 4px;
}
.view {
  border-top: 1px solid #666;
  border-left: 1px solid #888;
}
.view svg {
  width: 100%;
  height: 100%;
}
.view-left {
  flex: 556;
  background: #fff;
}
.view-right {
  flex: 538;
  border-left-width: 2px;
}
.view text { font-size: 10px; fill: #222; }
.view .unit { fill: #22b; }
.view .axis text { font-size: 7px; }
.view .axis .z { fill: #b33; }
.view .axis .y { fill: #373; }
.view .axis .x { fill: #44a; }
.view .scale text { font-size: 7px; }

/* results */
.results {
  flex: none;
  display: flex;
  border-top: 1px solid #aaa;
  padding-bottom: 3px;
}
.dock {
  width: 10px;
  padding: 3px 0 0 1px;
  display: flex;
  flex-direction: column;
  align-items: center;
}
.dock button {
  width: 8px;
  height: 9px;
  border: 1px solid #888;
  border-width: 0 1px 1px 0;
}
.dock svg { width: 7px; height: 7px; }
.rail {
  flex: 1;
  width: 4px;
  border: 1px solid #bbb;
  border-width: 0 1px;
}
.coefs {
  width: 233px;
  padding-top: 19px;
}
.combos {
  width: 359px;
  margin-left: 4px;
  padding-top: 17px;
}
h3 {
  height: 12px;
  line-height: 10px;
  font-family: "Open Sans", sans-serif;
}
.sunken {
  border: 1px solid #fff;
  border-top: 2px solid #777;
  border-left: 1px solid #888;
}
.coefs .sunken {
  height: 79px;
  margin-bottom: 2px;
  padding-right: 2px;
}
.coef {
  width: 229px;
  background: #fff;
}
.coef td, .coef th {
  border-right: 1px solid #888;
  border-bottom: 1px solid #888;
  text-align: center;
}
.global { height: 65px; }
.combo { height: 54px; }
.global th {
  background: #e2e2e2;
  box-shadow: inset 0 0 0 1px #f4f4f4;
}
.combo th {
  background: #c0c0c0;
  text-align: left;
  padding-left: 2px;
  border-color: #222;
}
.hot td { background: #ffd700; }
.combo-list {
  display: flex;
  height: 152px;
  overflow: hidden;
  padding-right: 1px;
}
.combo-list table {
  flex: 1;
  height: 155px;
  background: #fff;
}
.combo-list thead th {
  height: 16px;
  background: #c0c0c0;
  border-right: 1px solid #222;
  border-bottom: 1px solid #222;
  font: bold 7px/9px "Open Sans", sans-serif;
  vertical-align: top;
}
.combo-list thead .mid { vertical-align: middle; }
.combo-list thead .sort { vertical-align: bottom; }
.combo-list tbody th {
  background: #c0c0c0;
  border-right: 1px solid #222;
  border-bottom: 1px solid #222;
}
.combo-list td {
  border-right: 1px solid #888;
  border-bottom: 1px solid #888;
  text-align: center;
}
.combo-list td:nth-child(3) { background: #f0e68c; }
.combo-list td.a2 { background: #00bfff; }
.combo-list .hot td { background: #ffd700; border-bottom: 1px dashed #664; }
.combo-list td:last-child { text-align: left; padding-left: 2px; }
.combo-list .vscroll { padding: 2px 0; justify-content: space-between; }
.combo-list .thumb { height: 11px; margin: 2px 0 auto; }
.actions {
  display: flex;
  justify-content: flex-end;
  gap: 11px;
  padding: 8px 1px 10px 0;
}
.actions button {
  width: 49px;
  height: 15px;
  border: 1px solid #aaa;
  background: #e1e1e1;
  font-family: "Open Sans", sans-serif;
}

/* right strip */
.sidetools {
  width: 22px;
  flex: none;
  background: #fff;
}
.strip {
  display: flex;
  flex-direction: column;
  align-items: center;
  gap: 3px;
  padding: 6px 0 2px;
  background: #f0f0f0;
  border-bottom: 1px solid #999;
  border-top: 1px dotted #aaa;
}
.strip.second {
  margin-top: 9px;
}
.strip svg {
  width: 16px;
  height: 16px;
}
.strip .last { margin-top: 31px; }

.status {
  flex: none;
  height: 28px;
  padding: 2px 0 0 2px;
  border-top: 1px solid #bbb;
}
.status span {
  display: inline-block;
  width: 76px;
  padding: 2px 1px;
  background: #fff;
  border-left: 1px solid #999;
  border-top: 1px solid #999;
}

/* windows taskbar */
.taskbar {
  flex: none;
  display: flex;
  justify-content: space-between;
  height: 27px;
  background: #464646;
  color: #eee;
  font-size: 8px;
}
.apps {
  display: flex;
  width: 686px;
}
.apps button {
  flex: 1;
}
.apps svg {
  width: 16px;
  height: 16px;
}
.apps text {
  font: bold 7px "Open Sans", sans-serif;
}
.apps .open {
  background: linear-gradient(#f0c890, #f0c890) bottom / 26px 2px no-repeat;
}
.apps .current {
  background-color: #6e6e6e;
  background-size: 100% 2px;
}
.tray {
  display: flex;
  align-items: center;
  gap: 4px;
  padding-right: 16px;
}
.tray .pen { margin: 0 3px; }
.clock {
  display: flex;
  flex-direction: column;
  align-items: center;
  gap: 3px;
  margin: 0 7px 0 4px;
}
```
